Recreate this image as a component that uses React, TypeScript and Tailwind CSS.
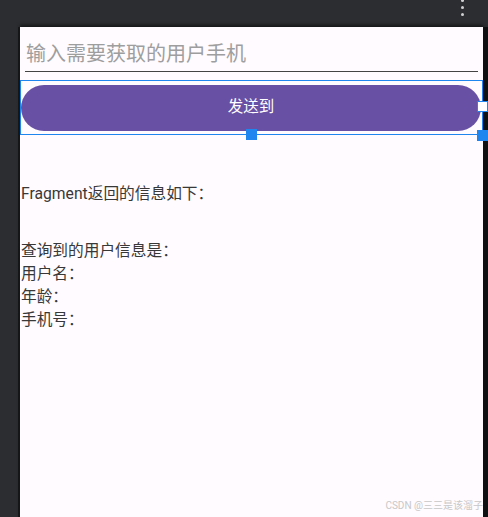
const cjk = "font-['Roboto','Noto_Sans_CJK_SC',sans-serif]";

function Handle({ className }: { className: string }) {
  return <div className={`absolute w-[11px] h-[11px] border-[1.5px] border-[#1f86f0] ${className}`} />;
}

export default function App() {
  return (
    <div className={`w-[488px] h-[517px] bg-[#2b2d30] overflow-hidden relative flex pl-[20px] pt-[27px] ${cjk}`}>
      {/* overflow menu dots */}
      <div className="absolute left-[461px] top-[-1px] flex flex-col gap-[4px]">
        <span className="w-[3px] h-[3px] rounded-full bg-[#d0d0d0]" />
        <span className="w-[3px] h-[3px] rounded-full bg-[#d0d0d0]" />
        <span className="w-[3px] h-[3px] rounded-full bg-[#d0d0d0]" />
      </div>

      <div className="w-[463px] h-[500px] shrink-0 flex flex-col bg-[#fffbfe] shadow-[-2px_0_0_#151617,5px_0_0_#0f1011,0_-2px_3px_#151617]">
        {/* phone number input */}
        <div className="mx-[5px] h-[45px] flex items-end pb-[4px] border-b border-[#444]">
          <span className="text-[20px] leading-[26px] text-[#9e9e9e] pl-[1px]">输入需要获取的用户手机</span>
        </div>

        {/* send button, selected in the layout editor */}
        <div className="relative mt-[8px] h-[55px] border-[1.5px] border-[#1f86f0] flex items-center">
          <button className="w-[460px] h-[46px] rounded-full bg-[#6851a5] text-white text-[15.5px] leading-none">
            发送到
          </button>
          <Handle className="right-[-6px] top-[20px] bg-white" />
          <Handle className="left-[225px] bottom-[-6px] bg-[#1f86f0]" />
          <Handle className="right-[-6px] bottom-[-7px] bg-[#1f86f0]" />
        </div>

        <div className="flex flex-col text-[15.7px] leading-[23px] text-[#383838] pl-[1px]">
          <p className="mt-[47px]">Fragment返回的信息如下：</p>
          <p className="mt-[34px]">查询到的用户信息是：</p>
          <p>用户名：</p>
          <p>年龄：</p>
          <p>手机号：</p>
        </div>
      </div>

      <div className="absolute right-[5px] top-[498px] text-[10px] text-[#c8c8c8]">CSDN @三三是该溜子</div>
    </div>
  );
}
